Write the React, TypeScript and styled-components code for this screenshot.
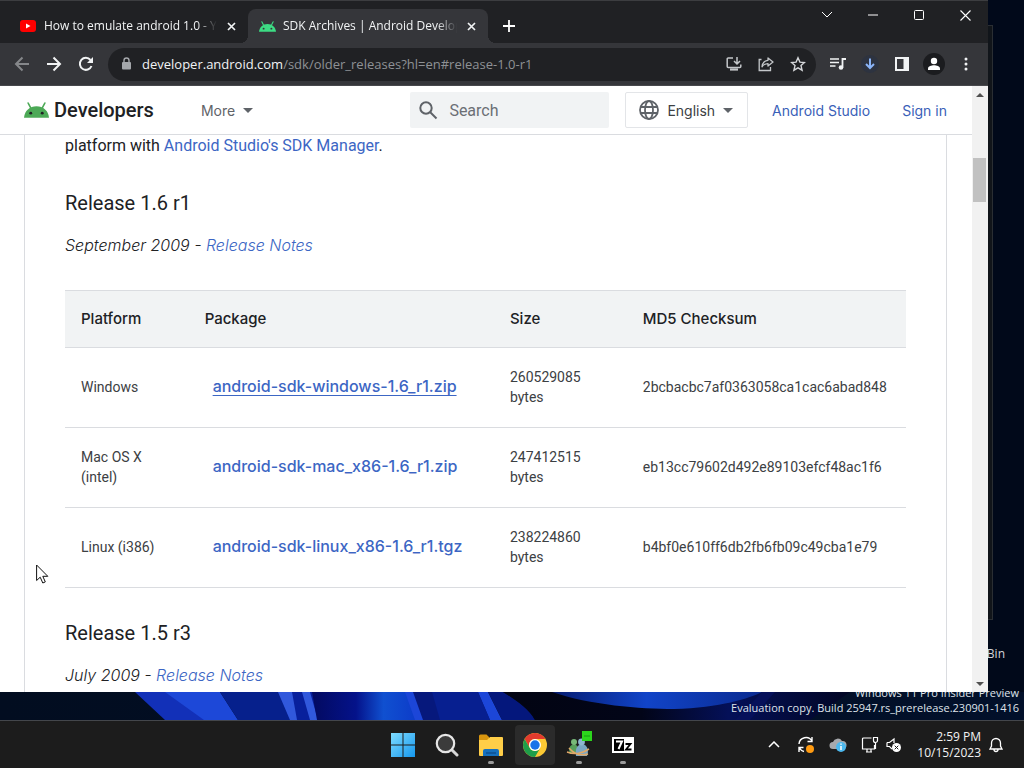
import React from "react";
import styled, { createGlobalStyle, css } from "styled-components";

const uiFont = `"Open Sans", "Noto Sans", sans-serif`;
const siteFont = `Roboto, "Liberation Sans", sans-serif`;
const accentFont = `Inter, Roboto, sans-serif`;

const GlobalStyle = createGlobalStyle`
  *, *::before, *::after { box-sizing: border-box; }
  body { margin: 0; background: #01091a; font-family: ${uiFont}; overflow: hidden; }
  button { border: 0; padding: 0; background: none; color: inherit; font: inherit; cursor: default; }
  a { text-decoration: none; }
  svg { display: block; flex: none; }
`;

const Screen = styled.div`
  position: relative;
  height: 100vh;
  display: flex;
  flex-direction: column;
  overflow: hidden;
  background: #01091a;
`;

const Desktop = styled.main`
  position: relative;
  flex: 1;
  min-height: 0;
  display: flex;
  padding: 0 36px 28px 0;
`;

const Wallpaper = styled.svg`
  position: absolute;
  left: 0;
  bottom: 0;
  width: 100%;
  height: 28px;
`;

const BackWindow = styled.div`
  position: absolute;
  top: 25px;
  right: 31px;
  bottom: 100px;
  width: 40px;
  background: #11151a;
  border: 1px solid #2a2e33;
  border-left: 0;
`;

const DesktopLabel = styled.span`
  position: absolute;
  right: 19px;
  bottom: 58px;
  font-size: 12px;
  line-height: 16px;
  color: #d5d7da;
`;

const Watermark = styled.p`
  position: absolute;
  right: 5px;
  bottom: 5px;
  margin: 0;
  text-align: right;
  font-size: 11px;
  line-height: 15px;
  color: #dfe3ea;
  white-space: nowrap;
`;

const Browser = styled.section`
  position: relative;
  flex: 1;
  min-width: 0;
  display: flex;
  flex-direction: column;
  background: #fff;
  overflow: hidden;
`;

const TabStrip = styled.div`
  flex: none;
  height: 43px;
  display: flex;
  align-items: stretch;
  padding: 8px 0 0 8px;
  background: #202124;
  border-top: 1px solid #3c3d40;
  color: #f1f3f4;
`;

const Tab = styled.div<{ $active?: boolean }>`
  position: relative;
  display: flex;
  align-items: center;
  gap: 7px;
  width: 240px;
  padding: 0 10px 0 11px;
  font-size: 12px;
  border-radius: 8px 8px 0 0;
  ${(p) =>
    p.$active &&
    css`
      background: #35363a;
      &::before,
      &::after {
        content: "";
        position: absolute;
        bottom: 0;
        width: 8px;
        height: 8px;
      }
      &::before {
        left: -8px;
        background: radial-gradient(circle at 0 0, transparent 8px, #35363a 8px);
      }
      &::after {
        right: -8px;
        background: radial-gradient(circle at 100% 0, transparent 8px, #35363a 8px);
      }
    `}
`;

const TabTitle = styled.span`
  flex: 1;
  min-width: 0;
  overflow: hidden;
  white-space: nowrap;
  line-height: 18px;
  mask-image: linear-gradient(to right, #000 calc(100% - 20px), transparent);
`;

const TabClose = styled.button`
  display: grid;
  place-items: center;
  width: 14px;
  height: 16px;
`;

const NewTab = styled.button`
  display: grid;
  place-items: center;
  width: 28px;
  margin-left: 7px;
`;

const WindowControls = styled.div`
  display: flex;
  margin-left: auto;
  margin-top: -6px;
`;

const WindowButton = styled.button`
  display: grid;
  place-items: center;
  width: 46px;
  height: 24px;
`;

const Toolbar = styled.div`
  flex: none;
  height: 43px;
  display: flex;
  align-items: center;
  padding: 0 6px;
  background: #35363a;
  border-bottom: 1px solid #47484c;
`;

const ToolButton = styled.button<{ $dim?: boolean }>`
  display: grid;
  place-items: center;
  flex: none;
  width: 32px;
  height: 32px;
  color: ${(p) => (p.$dim ? "#85878a" : "#f1f3f4")};
`;

const Omnibox = styled.div`
  flex: 1;
  min-width: 0;
  height: 33px;
  display: flex;
  align-items: center;
  margin: 0 6px;
  padding: 0 2px 0 12px;
  border-radius: 17px;
  background: #202124;
  color: #c4c7ca;
`;

const Address = styled.span`
  flex: 1;
  margin-left: 10px;
  font-size: 13px;
  line-height: 20px;
  color: #8e9195;
  white-space: nowrap;
  overflow: hidden;
`;

const Host = styled.span`
  color: #f1f3f4;
`;

const Viewport = styled.div`
  flex: 1;
  min-height: 0;
  display: flex;
`;

const Site = styled.div`
  flex: 1;
  min-width: 0;
  display: flex;
  flex-direction: column;
  overflow: hidden;
  font-family: ${siteFont};
  color: #202124;
`;

const SiteHeader = styled.header`
  flex: none;
  height: 49px;
  display: flex;
  align-items: center;
  padding: 0 25px 0 24px;
  border-bottom: 1px solid #dadce0;
  font-family: ${accentFont};
  font-size: 14px;
`;

const Brand = styled.a`
  display: flex;
  align-items: center;
  gap: 5px;
  color: #202124;
  font-family: ${siteFont};
  font-size: 20px;
  font-weight: 500;
  line-height: 24px;
`;

const NavButton = styled.button`
  display: flex;
  align-items: center;
  gap: 8px;
  margin-left: 47px;
  color: #5f6368;
`;

const SearchField = styled.label`
  display: flex;
  align-items: center;
  gap: 11px;
  width: 199px;
  height: 36px;
  margin-left: auto;
  padding: 0 8px;
  background: #f1f3f4;
  border-radius: 2px;
  color: #5f6368;
`;

const SearchInput = styled.input`
  flex: 1;
  min-width: 0;
  border: 0;
  padding: 0;
  outline: 0;
  background: none;
  font: 16px ${siteFont};
  color: #202124;
  &::placeholder { color: #6b6f74; opacity: 1; }
`;

const LanguageButton = styled.button`
  display: flex;
  align-items: center;
  gap: 8px;
  height: 36px;
  margin-left: 16px;
  padding: 0 14px 0 13px;
  border: 1px solid #e3e5e8;
  border-radius: 2px;
  color: #3c4043;
`;

const HeaderLink = styled.a`
  margin-left: 24px;
  color: #3a5fb8;
  white-space: nowrap;
  & + & { margin-left: 32px; }
`;

const Article = styled.article`
  flex: 1;
  min-height: 0;
  margin: 0 25px 0 24px;
  padding: 0 40px;
  border: solid #dadce0;
  border-width: 0 1px;
  overflow: hidden;
`;

const Paragraph = styled.p`
  margin: 0 0 30px;
  font-size: 16px;
  line-height: 22px;
`;

const TextLink = styled.a`
  color: #3c66c4;
`;

const ReleaseTitle = styled.h3`
  margin: 0 0 14px;
  font-size: 20px;
  font-weight: 400;
  line-height: 32px;
`;

const ReleaseDate = styled.p`
  margin: 0;
  font-family: ${accentFont};
  font-size: 16px;
  font-style: italic;
  font-weight: 300;
  line-height: 24px;
`;

const Table = styled.table`
  width: 100%;
  margin: 33px 0 29px;
  table-layout: fixed;
  border-collapse: collapse;
  border-top: 1px solid #dadce0;
`;

const Column = styled.col<{ $width: string }>`
  width: ${(p) => p.$width};
`;

const HeadCell = styled.th`
  height: 57px;
  padding: 0 16px;
  background: #f1f3f4;
  border-bottom: 1px solid #dadce0;
  text-align: left;
  font-family: ${accentFont};
  font-size: 15px;
  font-weight: 500;
  line-height: 24px;
`;

const Cell = styled.td`
  height: 80px;
  padding: 0 16px 2px;
  border-bottom: 1px solid #dadce0;
  font-size: 14px;
  line-height: 20px;
  color: #3c4043;
`;

const PackageLink = styled.a<{ $hovered?: boolean }>`
  margin-left: 8px;
  font-family: ${accentFont};
  font-size: 16px;
  font-weight: 500;
  color: #3c66c4;
  white-space: nowrap;
  text-decoration: ${(p) => (p.$hovered ? "underline" : "none")};
  text-underline-offset: 3px;
`;

const Scrollbar = styled.div`
  flex: none;
  width: 16px;
  display: flex;
  flex-direction: column;
  align-items: center;
  justify-content: space-between;
  padding: 7px 0 6px;
  background: #f1f1f1;
`;

const ScrollTrack = styled.div`
  flex: 1;
  width: 100%;
  padding: 61px 2px 0 1px;
`;

const ScrollThumb = styled.div`
  height: 44px;
  background: #c1c1c1;
`;

const Pointer = styled.svg`
  position: absolute;
  left: 36px;
  top: 564px;
`;

const Taskbar = styled.footer`
  position: relative;
  flex: none;
  height: 48px;
  display: grid;
  grid-template-columns: 1fr auto 1fr;
  background: #1c1c1c;
  border-top: 1px solid #43464b;
`;

const AppRow = styled.div`
  grid-column: 2;
  display: flex;
  align-items: center;
  gap: 4px;
  padding-left: 2px;
`;

const AppButton = styled.button<{ $open?: boolean; $active?: boolean }>`
  position: relative;
  display: grid;
  place-items: center;
  width: 40px;
  height: 40px;
  border-radius: 4px;
  background: ${(p) => (p.$active ? "#2b2b2b" : "transparent")};
  ${(p) =>
    p.$open &&
    css`
      &::after {
        content: "";
        position: absolute;
        bottom: 1px;
        left: 17px;
        width: 6px;
        height: 3px;
        border-radius: 2px;
        background: #9b9b9b;
      }
    `}
`;

const Tray = styled.div`
  grid-column: 3;
  display: flex;
  align-items: center;
  justify-content: flex-end;
  padding-right: 20px;
  color: #f3f3f3;
`;

const TrayButton = styled.button<{ $narrow?: boolean }>`
  display: grid;
  place-items: center;
  flex: none;
  width: ${(p) => (p.$narrow ? 16 : 32)}px;
  height: 32px;
`;

const Clock = styled.button`
  margin: 0 7px 0 15px;
  text-align: right;
  font-size: 12px;
  line-height: 16px;
  white-space: nowrap;
`;

const Caret = () => (
  <svg width="10" height="5" viewBox="0 0 10 5"><path d="M0 0h10L5 5z" fill="#5f6368" /></svg>
);

const CloseGlyph = () => (
  <svg width="9" height="9" viewBox="0 0 9 9"><path d="M1 1l7 7M8 1L1 8" stroke="#f1f3f4" strokeWidth="1.7" /></svg>
);

const AndroidHead = ({ color, eye, width, height }: { color: string; eye: string; width: number; height: number }) => (
  <svg width={width} height={height} viewBox="0 0 24 15">
    <path d="M6.200 5L4 .8M17.800 5L20 .8" stroke={color} strokeWidth="1.500" strokeLinecap="round" />
    <path d="M0 15C.5 8.500 5.500 4 12 4S23.500 8.500 24 15z" fill={color} />
    <circle cx="6.500" cy="10.500" r="1.400" fill={eye} />
    <circle cx="17.500" cy="10.500" r="1.400" fill={eye} />
  </svg>
);

const releases = [
  { platform: "Windows", file: "android-sdk-windows-1.6_r1.zip", size: "260529085 bytes", md5: "2bcbacbc7af0363058ca1cac6abad848", hovered: true },
  { platform: "Mac OS X (intel)", file: "android-sdk-mac_x86-1.6_r1.zip", size: "247412515 bytes", md5: "eb13cc79602d492e89103efcf48ac1f6" },
  { platform: "Linux (i386)", file: "android-sdk-linux_x86-1.6_r1.tgz", size: "238224860 bytes", md5: "b4bf0e610ff6db2fb6fb09c49cba1e79" },
];

const WallpaperArt = () => (
  <Wallpaper viewBox="0 0 1024 28" preserveAspectRatio="none" aria-hidden="true">
    <defs>
      <linearGradient id="deep" x1="0" x2="1">
        <stop offset="0" stopColor="#020d20" /><stop offset="1" stopColor="#02102a" />
      </linearGradient>
      <linearGradient id="valley" x1="0" x2="1">
        <stop offset="0" stopColor="#030a60" /><stop offset=".4" stopColor="#04128a" />
        <stop offset=".65" stopColor="#1050d0" /><stop offset="1" stopColor="#0c38c8" />
      </linearGradient>
      <linearGradient id="hollow" x1="0" x2="1">
        <stop offset="0" stopColor="#020412" /><stop offset=".4" stopColor="#020518" />
        <stop offset=".65" stopColor="#041058" /><stop offset="1" stopColor="#020624" />
      </linearGradient>
      <linearGradient id="sweep" x1="0" x2="1">
        <stop offset="0" stopColor="#061c70" /><stop offset=".45" stopColor="#1144c8" /><stop offset="1" stopColor="#0a2a90" />
      </linearGradient>
    </defs>
    <rect width="1024" height="28" fill="url(#deep)" />
    <path d="M135 0H175L235 28H165Z" fill="#1230b8" />
    <path d="M165 0H220L238 28H204Z" fill="#1d48d8" />
    <path d="M220 0H282L294 28H238Z" fill="#06208c" />
    <path d="M278 0H320V28H290Z" fill="#08209c" />
    <path d="M278 0h14l5 28h-7zM302 0h8l8 28h-8z" fill="#3158dc" />
    <path d="M312 0H412L422 28H317Z" fill="url(#valley)" />
    <path d="M412 0H480L502 28H422Z" fill="#06187c" />
    <path d="M405 0h8l10 28h-8zM478 0h10l14 28h-12z" fill="#1c46d8" />
    <path d="M432 0h46l12 28h-50z" fill="#071f90" />
    <path d="M488 0H503C516 8 528 16 535 28H502z" fill="#04177c" />
    <path d="M503 0H850L810 28H535C528 16 516 8 503 0z" fill="url(#hollow)" />
    <path d="M552 0C590 13 640 17 674 17C720 16 750 6 762 0Z" fill="url(#sweep)" />
    <path d="M762 0H775L750 28H735Z" fill="#06105a" />
  </Wallpaper>
);

export default function App() {
  return (
    <Screen>
      <GlobalStyle />
      <Desktop>
        <WallpaperArt />
        <BackWindow />
        <DesktopLabel>Bin</DesktopLabel>
        <Watermark>Windows 11 Pro Insider Preview<br />Evaluation copy. Build 25947.rs_prerelease.230901-1416</Watermark>
        <Browser>
          <TabStrip>
            <Tab>
              <svg width="18" height="14" viewBox="0 0 18 14"><rect x="1" y="1" width="16" height="12" rx="3" fill="#f00" /><path d="M7 4.500v5L11.500 7z" fill="#fff" /></svg>
              <TabTitle>How to emulate android 1.0 - YouTube</TabTitle>
              <TabClose aria-label="Close tab"><CloseGlyph /></TabClose>
            </Tab>
            <Tab $active>
              <AndroidHead color="#3ddc84" eye="#35363a" width={17} height={11} />
              <TabTitle>SDK Archives | Android Developers</TabTitle>
              <TabClose aria-label="Close tab"><CloseGlyph /></TabClose>
            </Tab>
            <NewTab aria-label="New tab"><svg width="12" height="12" viewBox="0 0 12 12"><path d="M6 0v12M0 6h12" stroke="#fff" strokeWidth="1.8" /></svg></NewTab>
            <WindowControls>
              <WindowButton aria-label="Search tabs"><svg width="12" height="8" viewBox="0 0 12 8"><path d="M1 1l5 5 5-5" fill="none" stroke="#fff" /></svg></WindowButton>
              <WindowButton aria-label="Minimize"><svg width="10" height="2" viewBox="0 0 10 2"><path d="M0 1h10" stroke="#fff" /></svg></WindowButton>
              <WindowButton aria-label="Maximize"><svg width="10" height="10" viewBox="0 0 10 10"><rect x=".5" y=".5" width="9" height="9" rx="1" fill="none" stroke="#fff" /></svg></WindowButton>
              <WindowButton aria-label="Close"><svg width="11" height="11" viewBox="0 0 11 11"><path d="M.5.5l10 10M10.500.5l-10 10" stroke="#fff" strokeWidth="1.100" /></svg></WindowButton>
            </WindowControls>
          </TabStrip>
          <Toolbar>
            <ToolButton $dim aria-label="Back"><svg width="16" height="16" viewBox="0 0 16 16" fill="none" stroke="currentColor" strokeWidth="2"><path d="M15 8H2M8.500 1.500L2 8l6.500 6.500" /></svg></ToolButton>
            <ToolButton aria-label="Forward"><svg width="16" height="16" viewBox="0 0 16 16" fill="none" stroke="currentColor" strokeWidth="2"><path d="M1 8h13M7.500 1.500L14 8l-6.500 6.500" /></svg></ToolButton>
            <ToolButton aria-label="Reload"><svg width="16" height="16" viewBox="0 0 16 16"><path d="M13.500 10A6 6 0 1 1 12.500 4" fill="none" stroke="currentColor" strokeWidth="2" /><path d="M15 1v6H9z" fill="currentColor" /></svg></ToolButton>
            <Omnibox>
              <svg width="12" height="14" viewBox="0 0 12 14"><rect x="2" y="5" width="9" height="7.500" rx="1" fill="#a4a7ab" /><path d="M4 6V3.500a2.500 2.500 0 0 1 5 0V6" fill="none" stroke="#a4a7ab" strokeWidth="1.400" /></svg>
              <Address><Host>developer.android.com</Host>/sdk/older_releases?hl=en#release-1.0-r1</Address>
              <ToolButton aria-label="Install"><svg width="16" height="16" viewBox="0 0 16 16" fill="none" stroke="#c4c7ca" strokeWidth="1.500"><path d="M7 2H2.200a1 1 0 0 0-1 1v7.500a1 1 0 0 0 1 1h11.600a1 1 0 0 0 1-1V8.500M11 1v6.500M8 5l3 3 3-3" /><path d="M4 13.500h8" strokeWidth="2.200" /></svg></ToolButton>
              <ToolButton aria-label="Share"><svg width="16" height="16" viewBox="0 0 16 16" fill="none" stroke="#c4c7ca" strokeWidth="1.300"><path d="M3.500 3.500H1.200v11h11.300V11" /><path d="M10 2l5 4-5 4V7.700C7 7.700 5.300 8.700 4 10.800 4.400 7 6.500 4.700 10 4.300z" strokeLinejoin="round" /></svg></ToolButton>
              <ToolButton aria-label="Bookmark"><svg width="16" height="16" viewBox="0 0 16 16" fill="none" stroke="#d5d7da" strokeWidth="1.400"><path d="M8 1.800l1.900 4.300 4.600.4-3.500 3.100 1.100 4.600L8 11.800l-4.100 2.400L5 9.600 1.500 6.500l4.600-.4z" /></svg></ToolButton>
            </Omnibox>
            <ToolButton aria-label="Media"><svg width="16" height="14" viewBox="0 0 16 14"><path d="M0 2h9M0 5.500h9M0 9h5.500" stroke="currentColor" strokeWidth="1.600" /><path d="M12.500 10.500V2H16" fill="none" stroke="currentColor" strokeWidth="1.800" /><circle cx="11" cy="10.500" r="2.300" fill="currentColor" /></svg></ToolButton>
            <ToolButton aria-label="Downloads"><svg width="20" height="20" viewBox="0 0 20 20"><circle cx="10" cy="10" r="9" fill="#2d3340" /><path d="M10 4.500v9M6 10l4 4 4-4" fill="none" stroke="#8ab4f8" strokeWidth="2" /></svg></ToolButton>
            <ToolButton aria-label="Side panel"><svg width="14" height="14" viewBox="0 0 14 14"><path d="M0 0h14v14H0zM2 2v10h6.500V2z" fill="currentColor" fillRule="evenodd" /></svg></ToolButton>
            <ToolButton aria-label="Profile"><svg width="22" height="22" viewBox="0 0 22 22"><circle cx="11" cy="11" r="11" fill="#1b1c1f" /><circle cx="11" cy="8" r="3.200" fill="#fff" /><path d="M5 17v-1.500C5 13 8.500 12.200 11 12.200s6 .8 6 3.300V17z" fill="#fff" /></svg></ToolButton>
            <ToolButton aria-label="Menu"><svg width="4" height="14" viewBox="0 0 4 14" fill="currentColor"><circle cx="2" cy="2" r="1.500" /><circle cx="2" cy="7" r="1.500" /><circle cx="2" cy="12" r="1.500" /></svg></ToolButton>
          </Toolbar>
          <Viewport>
            <Site>
              <SiteHeader>
                <Brand href="#"><AndroidHead color="#4ca956" eye="#202124" width={25} height={16} />Developers</Brand>
                <NavButton>More <Caret /></NavButton>
                <SearchField>
                  <svg width="20" height="20" viewBox="0 0 20 20" fill="none" stroke="#5f6368" strokeWidth="2"><circle cx="8" cy="8" r="5.700" /><path d="M12 12l6.500 6.500" /></svg>
                  <SearchInput placeholder="Search" aria-label="Search" />
                </SearchField>
                <LanguageButton>
                  <svg width="20" height="20" viewBox="0 0 20 20" fill="none" stroke="#5f6368" strokeWidth="1.800"><circle cx="10" cy="10" r="9" /><ellipse cx="10" cy="10" rx="4" ry="9" /><path d="M1.500 7h17M1.500 13h17" /></svg>
                  English <Caret />
                </LanguageButton>
                <HeaderLink href="#">Android Studio</HeaderLink>
                <HeaderLink href="#">Sign in</HeaderLink>
              </SiteHeader>
              <Article>
                <Paragraph>platform with <TextLink href="#">Android Studio's SDK Manager</TextLink>.</Paragraph>
                <ReleaseTitle>Release 1.6 r1</ReleaseTitle>
                <ReleaseDate>September 2009 - <TextLink href="#">Release Notes</TextLink></ReleaseDate>
                <Table>
                  <colgroup><Column $width="14.7%" /><Column $width="36.3%" /><Column $width="15.8%" /><Column $width="33.2%" /></colgroup>
                  <thead><tr><HeadCell>Platform</HeadCell><HeadCell>Package</HeadCell><HeadCell>Size</HeadCell><HeadCell>MD5 Checksum</HeadCell></tr></thead>
                  <tbody>
                    {releases.map((r) => (
                      <tr key={r.file}>
                        <Cell>{r.platform}</Cell>
                        <Cell><PackageLink href="#" $hovered={r.hovered}>{r.file}</PackageLink></Cell>
                        <Cell>{r.size}</Cell>
                        <Cell>{r.md5}</Cell>
                      </tr>
                    ))}
                  </tbody>
                </Table>
                <ReleaseTitle>Release 1.5 r3</ReleaseTitle>
                <ReleaseDate>July 2009 - <TextLink href="#">Release Notes</TextLink></ReleaseDate>
              </Article>
            </Site>
            <Scrollbar>
              <svg width="8" height="4" viewBox="0 0 8 4"><path d="M0 4l4-4 4 4z" fill="#505050" /></svg>
              <ScrollTrack><ScrollThumb /></ScrollTrack>
              <svg width="8" height="4" viewBox="0 0 8 4"><path d="M0 0h8L4 4z" fill="#505050" /></svg>
            </Scrollbar>
          </Viewport>
        </Browser>
        <Pointer width="13" height="20" viewBox="0 0 13 20"><path d="M.6 1v15.500l3.600-3.300 2.600 5.800 2.500-1.100-2.500-5.600h5z" fill="#fff" stroke="#111" strokeWidth="1" /></Pointer>
      </Desktop>
      <Taskbar>
        <AppRow>
          <AppButton aria-label="Start"><svg width="24" height="24" viewBox="0 0 24 24"><defs><linearGradient id="win" x1="0" y1="0" x2="1" y2="1"><stop offset="0" stopColor="#7fdcff" /><stop offset="1" stopColor="#1597ee" /></linearGradient></defs><path d="M0 0h11.500v11.500H0zM12.500 0H24v11.500H12.500zM0 12.500h11.500V24H0zM12.500 12.500H24V24H12.500z" fill="url(#win)" /></svg></AppButton>
          <AppButton aria-label="Search"><svg width="24" height="24" viewBox="0 0 24 24"><path d="M16 16l6 6" stroke="#d8d8d8" strokeWidth="3" strokeLinecap="round" /><circle cx="10.500" cy="10.500" r="8.700" fill="#3b3b3b" stroke="#e6e6e6" strokeWidth="2.200" /></svg></AppButton>
          <AppButton $open aria-label="File Explorer"><svg width="26" height="24" viewBox="0 0 26 24"><path d="M1 3a1.500 1.500 0 0 1 1.500-1.500h6L11 4v4H1z" fill="#d9960f" /><path d="M1 7h8l3-3h12a1 1 0 0 1 1 1v17a1 1 0 0 1-1 1H2a1 1 0 0 1-1-1z" fill="#ffce48" /><path d="M5 23v-5a2 2 0 0 1 2-2h12a2 2 0 0 1 2 2v5z" fill="#1670bd" /><path d="M8 20h10" stroke="#0e4f91" strokeWidth="1.500" /></svg></AppButton>
          <AppButton $active aria-label="Google Chrome"><svg width="24" height="24" viewBox="0 0 24 24"><circle cx="12" cy="12" r="12" fill="#fcc934" /><path d="M1.610 6A12 12 0 0 1 22.390 6H12a6 6 0 0 0-5.200 9z" fill="#e33b2e" /><path d="M1.610 6A12 12 0 0 0 12 24l5.200-9A6 6 0 0 1 6.800 15z" fill="#1e9e4a" /><circle cx="12" cy="12" r="6" fill="#fff" /><circle cx="12" cy="12" r="4.700" fill="#1a73e8" /></svg></AppButton>
          <AppButton $open aria-label="Messenger"><svg width="26" height="28" viewBox="0 0 26 28"><path d="M4 23c-2-6 0-9 4-10 4 1 5 5 4 10z" fill="#57a05a" /><circle cx="8" cy="11" r="3" fill="#78b978" /><path d="M10 25c-1-8 1-11 6-12 6 1 7 7 5 12z" fill="#7ba7c4" /><circle cx="15.500" cy="11" r="3.400" fill="#8fb7d0" /><path d="M1 21c8 3 14 2 22-3M3 17c5 6 12 8 19 6" fill="none" stroke="#e0a869" strokeWidth="1.500" /><rect x="16" y="0" width="10" height="10" fill="#2cd51c" /><path d="M18 5h6" stroke="#159b12" /></svg></AppButton>
          <AppButton $open aria-label="7-Zip"><svg width="22" height="16" viewBox="0 0 22 16"><rect width="22" height="16" fill="#fff" /><rect x="2" y="2" width="10" height="12" fill="#000" /><path d="M4 4.500h6L6.500 12" fill="none" stroke="#fff" strokeWidth="2" /><path d="M13.500 7h5L14 12.500h5.500" fill="none" stroke="#000" strokeWidth="1.800" /></svg></AppButton>
        </AppRow>
        <Tray>
          <TrayButton aria-label="Show hidden icons"><svg width="12" height="7" viewBox="0 0 12 7"><path d="M1 6l5-5 5 5" fill="none" stroke="#fff" strokeWidth="1.500" /></svg></TrayButton>
          <TrayButton aria-label="Update"><svg width="18" height="18" viewBox="0 0 18 18"><path d="M2 8A7 7 0 0 1 15 5M15 1v4.500h-4.500M2 16v-4.500h4.500M2.500 12A7 7 0 0 0 7 15.500" fill="none" stroke="#fff" strokeWidth="1.400" /><circle cx="13" cy="13" r="4" fill="#ff9b12" /></svg></TrayButton>
          <TrayButton aria-label="Cloud storage"><svg width="18" height="16" viewBox="0 0 18 16"><path d="M4 12a3.500 3.500 0 0 1 0-7 5 5 0 0 1 9-1 4 4 0 0 1 1 8z" fill="#a7a9ad" /><circle cx="12" cy="10" r="5" fill="#4cb8ee" /><path d="M12 9v4M12 6.500v1.300" stroke="#fff" strokeWidth="1.500" /></svg></TrayButton>
          <TrayButton aria-label="Network"><svg width="18" height="18" viewBox="0 0 18 18" fill="none" stroke="#fff" strokeWidth="1.200"><path d="M10.500 2H2.500a1 1 0 0 0-1 1v10h12V9M5 16h6M6 13v3M10 13v3" /><path d="M12.500 1.500h4v3a2 2 0 0 1-4 0zM14.500 7v6" /></svg></TrayButton>
          <TrayButton $narrow aria-label="Volume"><svg width="16" height="16" viewBox="0 0 16 16"><path d="M1 5.500h2.500L8 2v4M1 5.500v4h2.500L6 12" fill="none" stroke="#fff" strokeWidth="1.200" /><circle cx="10.500" cy="10.500" r="4.500" fill="#fff" /><path d="M8.700 8.700l3.600 3.600M12.300 8.700l-3.600 3.600" stroke="#1c1c1c" /></svg></TrayButton>
          <Clock>2:59 PM<br />10/15/2023</Clock>
          <svg width="16" height="18" viewBox="0 0 16 18" fill="none" stroke="#fff" strokeWidth="1.300"><path d="M2 13h12l-1.500-3V7a4.500 4.500 0 0 0-9 0v3zM6 13.500a2 2 0 0 0 4 0" /></svg>
        </Tray>
      </Taskbar>
    </Screen>
  );
}
